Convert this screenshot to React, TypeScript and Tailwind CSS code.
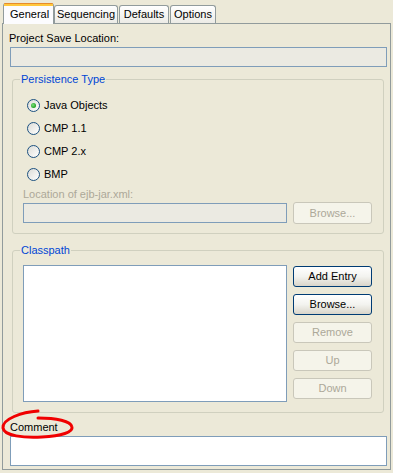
import React from "react";

const Radio = ({ checked, label }: { checked?: boolean; label: string }) => (
  <div className="flex h-[23px] items-center">
    <div className="relative flex h-[13px] w-[13px] items-center justify-center rounded-full border border-[#1C5180] bg-gradient-to-br from-[#DCDCD7] to-[#FFFFFF]">
      {checked && (
        <div className="h-[5px] w-[5px] rounded-full bg-[radial-gradient(circle_at_40%_40%,#7EE07E,#21A121_70%)]" />
      )}
    </div>
    <span className="ml-[4px]">{label}</span>
  </div>
);

const Btn = ({ label, disabled, h = "h-[21px]" }: { label: string; disabled?: boolean; h?: string }) => (
  <div
    className={
      disabled
        ? `flex ${h} w-[79px] items-center justify-center rounded-[3px] border border-[#C9C7BA] bg-[#F5F4EA] text-[#ACA899]`
        : `flex ${h} w-[79px] items-center justify-center rounded-[3px] border border-[#003C74] bg-gradient-to-b from-[#FFFFFF] via-[#F3F3EF] to-[#D9D5CA] text-black`
    }
  >
    {label}
  </div>
);

export default function App() {
  return (
    <div className="relative h-[473px] w-[393px] overflow-hidden bg-[#ECE9D8] pl-[2px] pt-[3px] font-['Liberation_Sans',Arial,sans-serif] text-[11px] leading-[13px] text-black">
      {/* Tabs */}
      <div className="relative z-10 flex h-[20px] items-end pl-[1px]">
        <div className="-mb-px flex h-[21px] w-[51px] flex-col rounded-t-[3px] border-x border-[#919B9C] bg-[#FCFCFE]">
          <div className="h-[1px] rounded-t-[3px] bg-[#E68B2C]" />
          <div className="h-[2px] bg-[#FFC73C]" />
          <div className="flex flex-1 items-center pl-[6px] pb-[1px]">General</div>
        </div>
        <div className="flex h-[18px] w-[64px] items-center justify-center rounded-t-[3px] border-x border-t border-[#919B9C] bg-gradient-to-b from-[#FFFFFF] to-[#ECEBE6]">
          Sequencing
        </div>
        <div className="ml-[1px] flex h-[18px] w-[50px] items-center justify-center rounded-t-[3px] border-x border-t border-[#919B9C] bg-gradient-to-b from-[#FFFFFF] to-[#ECEBE6]">
          Defaults
        </div>
        <div className="ml-[1px] flex h-[18px] w-[46px] items-center justify-center rounded-t-[3px] border-x border-t border-[#919B9C] bg-gradient-to-b from-[#FFFFFF] to-[#ECEBE6]">
          Options
        </div>
      </div>

      {/* Panel */}
      <div className="flex h-[447px] w-[389px] flex-col border border-[#919B9C] bg-[#ECE9D8]">
        <div className="ml-[6px] mt-[8px]">Project Save Location:</div>
        <div className="ml-[7px] mt-[2px] h-[20px] w-[377px] border border-[#7F9DB9] bg-[#EBEAE2]" />

        {/* Persistence group */}
        <div className="relative ml-[9px] mt-[12px] flex h-[155px] w-[372px] flex-col rounded-[3px] border border-[#D0D0BF] pl-[14px] pt-[14px]">
          <span className="absolute left-[7px] top-[-7px] bg-[#ECE9D8] px-[1px] text-[#0046D5]">Persistence Type</span>
          <Radio checked label="Java Objects" />
          <Radio label="CMP 1.1" />
          <Radio label="CMP 2.x" />
          <Radio label="BMP" />
          <div className="-ml-[4px] mt-[2px] text-[#ACA899]">Location of ejb-jar.xml:</div>
          <div className="-ml-[4px] mt-[1px] flex items-center gap-[6px]">
            <div className="h-[20px] w-[264px] border border-[#7F9DB9] bg-[#EBEAE2]" />
            <Btn label="Browse..." disabled h="h-[22px]" />
          </div>
        </div>

        {/* Classpath group */}
        <div className="relative ml-[9px] mt-[16px] flex h-[163px] w-[372px] rounded-[3px] border border-[#D0D0BF] pl-[10px] pt-[14px]">
          <span className="absolute left-[7px] top-[-7px] bg-[#ECE9D8] px-[1px] text-[#0046D5]">Classpath</span>
          <div className="h-[137px] w-[264px] border border-[#7F9DB9] bg-white" />
          <div className="ml-[6px] mt-[1px] flex flex-col gap-[7px]">
            <Btn label="Add Entry" />
            <Btn label="Browse..." />
            <Btn label="Remove" disabled />
            <Btn label="Up" disabled />
            <Btn label="Down" disabled />
          </div>
        </div>

        <div className="ml-[7px] mt-[8px]">Comment</div>
        <div className="ml-[7px] mt-[2px] h-[30px] w-[377px] border border-[#7F9DB9] bg-white" />
      </div>

      {/* Red annotation ellipse */}
      <svg className="absolute left-0 top-[405px]" width="80" height="40" viewBox="0 0 80 40" fill="none">
        <path
          d="M38,6 C22,7 2,14 3,23 C4,31 24,33 42,32 C62,31 73,27 72,22 C71,16 56,13 38,13"
          stroke="#F00000"
          strokeWidth="3"
          strokeLinecap="round"
        />
      </svg>
    </div>
  );
}
